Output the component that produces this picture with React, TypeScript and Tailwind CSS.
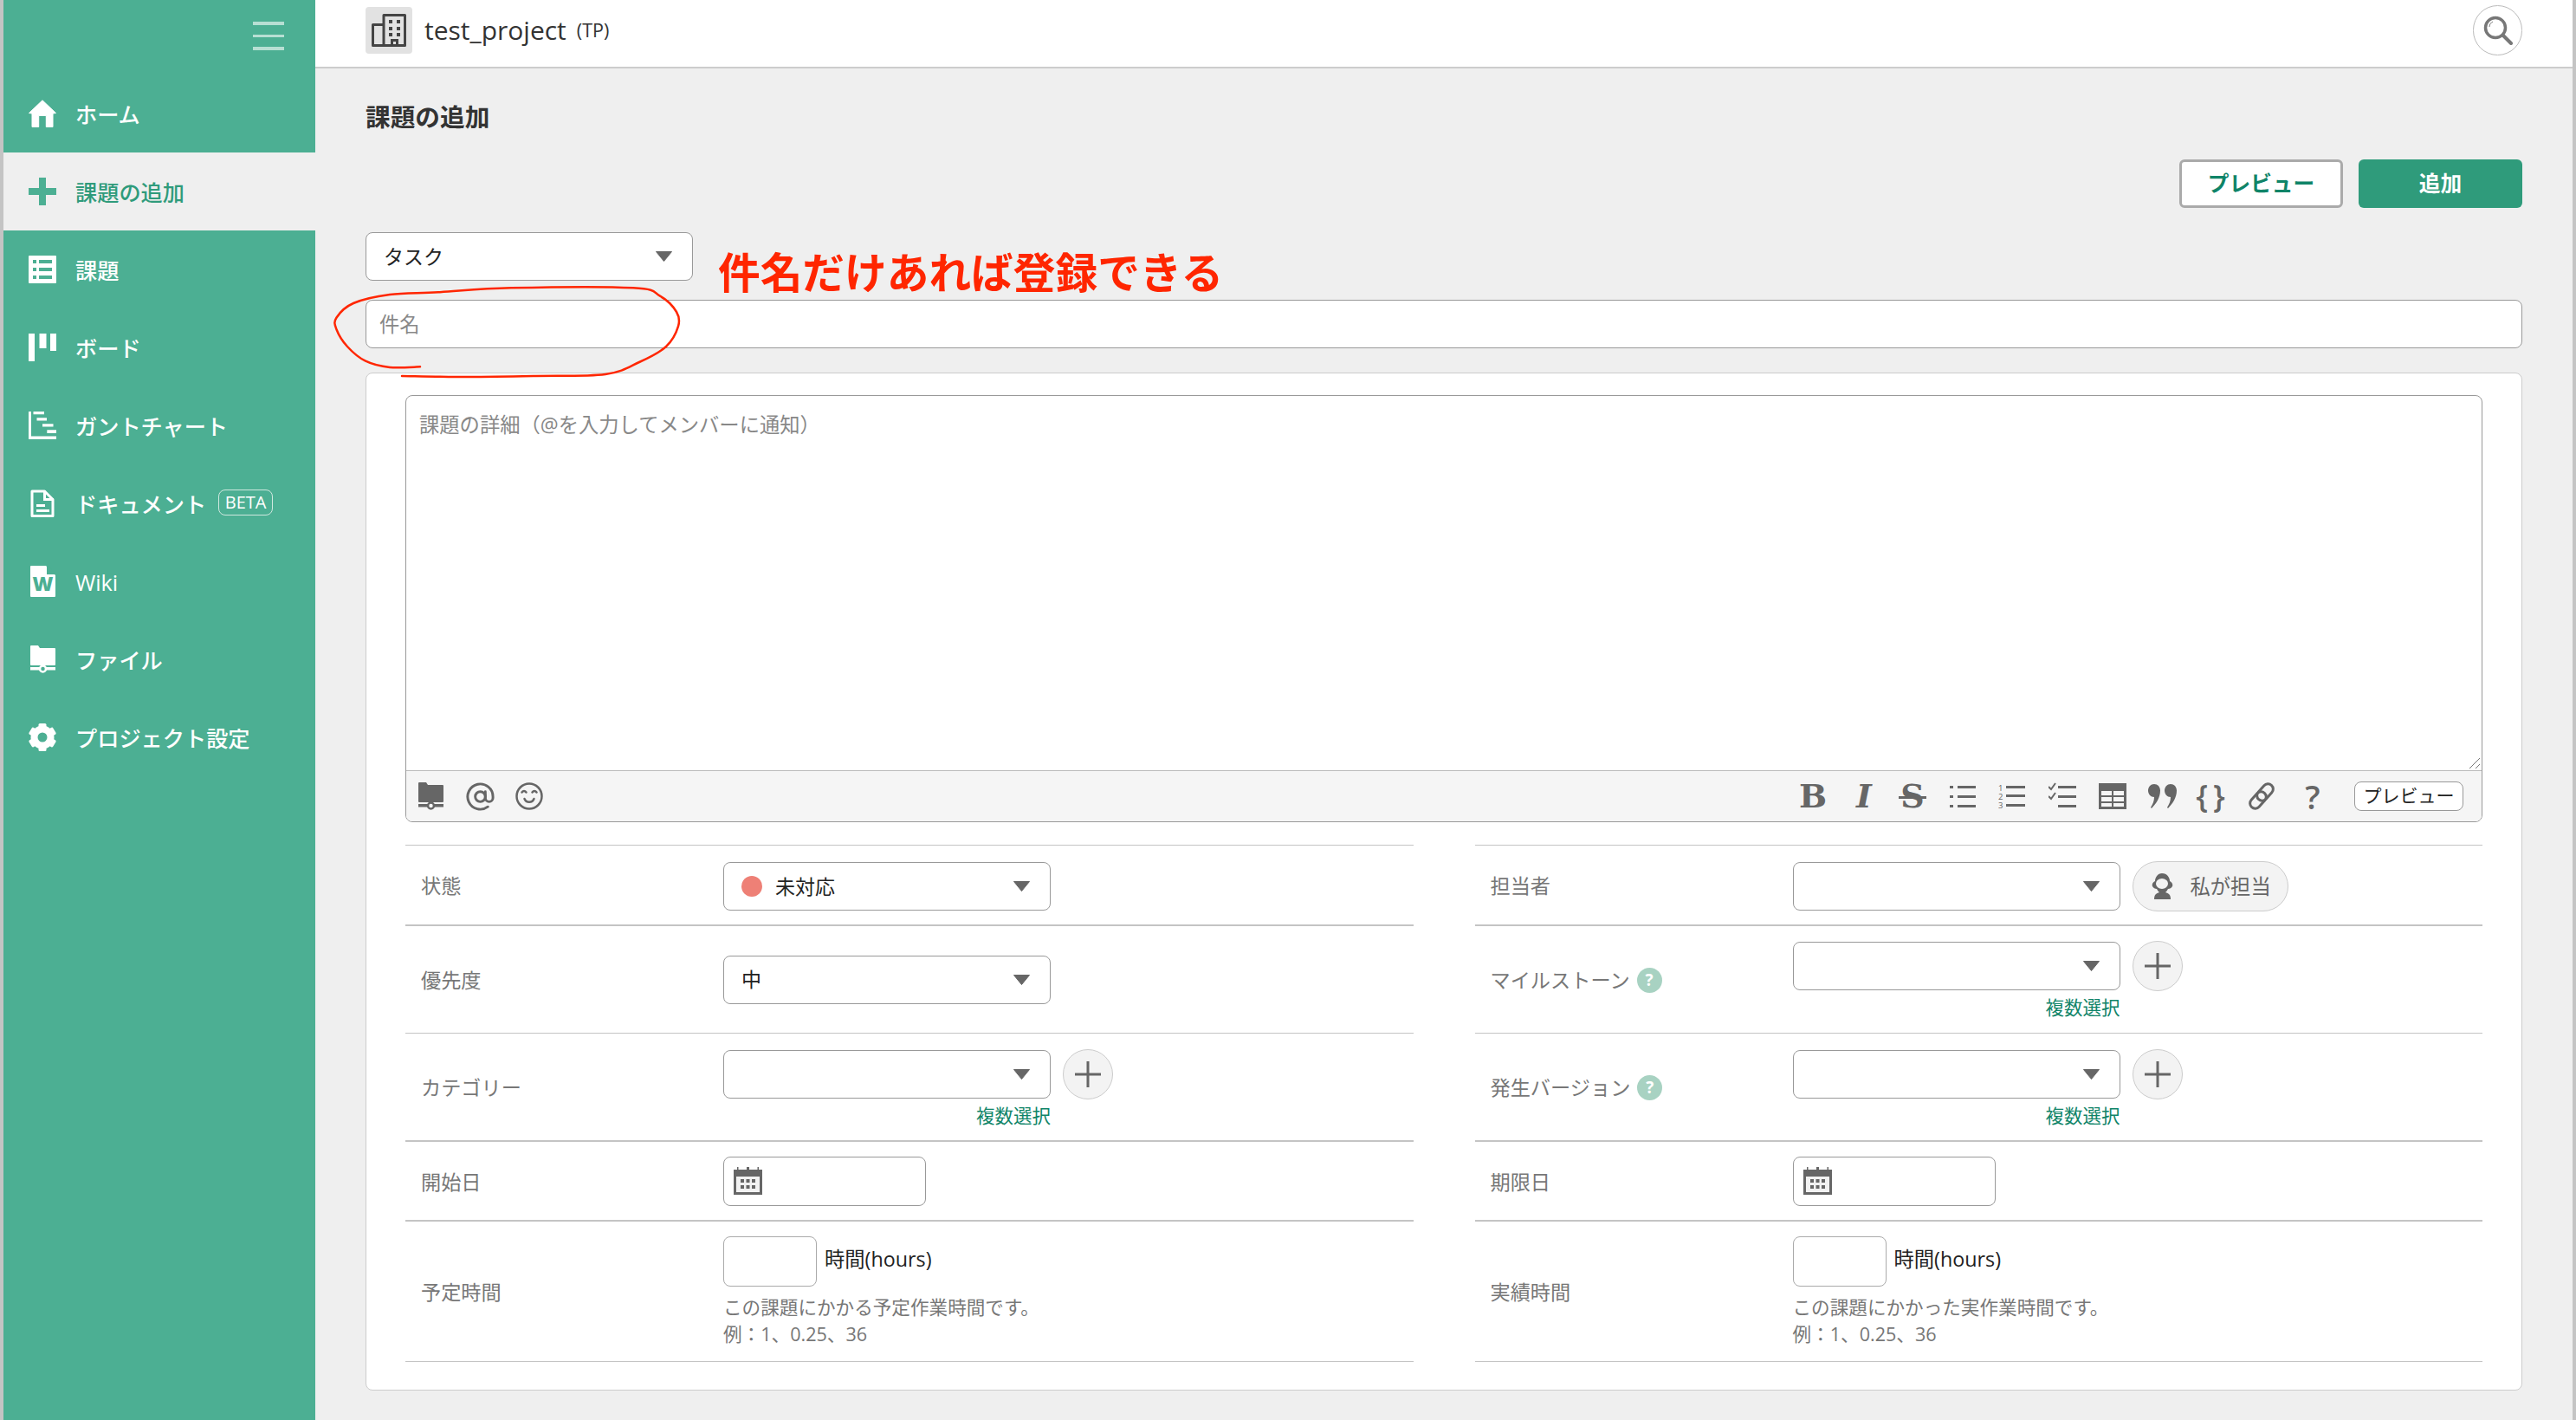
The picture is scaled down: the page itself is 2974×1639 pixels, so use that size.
import React from "react";
import { AtSign } from "lucide-react";

const W = "#4caf93";

function Svg({ w = 32, h = 32, children, className = "" }: { w?: number; h?: number; children: React.ReactNode; className?: string }) {
  return (
    <svg width={w} height={h} viewBox={`0 0 ${w} ${h}`} className={`shrink-0 ${className}`}>
      {children}
    </svg>
  );
}

const HomeI = ({ c = "#fff" }: { c?: string }) => (
  <Svg>
    <path fill={c} stroke={c} strokeWidth="1" strokeLinejoin="round" d="M16 .8 31.5 15.5 28 16V31.5H20.3V18.5H11.7V31.5H4V16L.5 15.5Z" />
  </Svg>
);
const PlusI = ({ c = "#fff" }: { c?: string }) => (
  <Svg>
    <path fill={c} d="M12 0h8v12h12v8H20v12h-8V20H0v-8h12z" />
  </Svg>
);
const ListI = ({ c = "#fff" }: { c?: string }) => (
  <Svg>
    <rect width="32" height="32" rx="1" fill={c} />
    <path fill={W} d="M5 5h4v4H5zM12 5h15v4H12zM5 14h4v4H5zM12 14h15v4H12zM5 23h4v4H5zM12 23h15v4H12z" />
  </Svg>
);
const BoardI = ({ c = "#fff" }: { c?: string }) => (
  <Svg>
    <path fill={c} d="M0 0h7v32H0zM12.500 0h8v17h-8zM25 0h7v20h-7z" />
  </Svg>
);
const GanttI = ({ c = "#fff" }: { c?: string }) => (
  <Svg>
    <path fill={c} d="M0 0h3v28.500h29V32H0zM5.500 0H18v3.300H5.500zM9.500 7.300H21v3.300H9.500zM16 14.300h12.500v3.300H16zM21.300 21.300H32V25H21.300z" />
  </Svg>
);
const DocI = ({ c = "#fff" }: { c?: string }) => (
  <Svg w={28}>
    <path fill="none" stroke={c} strokeWidth="3" strokeLinejoin="round" d="M2 2h14.500l9.500 9.500V30.500H2z" />
    <path fill={c} d="M15 1h3v9h9v3H15zM7 17h10v3H7zM7 23h15v3H7z" />
  </Svg>
);
const WikiI = () => (
  <Svg w={29} h={36}>
    <path fill="#fff" d="M1 0h17l11 11v24a1 1 0 0 1-1 1H1a1 1 0 0 1-1-1V1a1 1 0 0 1 1-1z" />
    <path fill={W} d="M19 0h1.200L29 9V10H19z" />
    <text x="14.500" y="29" textAnchor="middle" fontSize="23" fontWeight="800" fontFamily="Open Sans" fill={W}>W</text>
  </Svg>
);
const FolderI = ({ c = "#fff", bg = W }: { c?: string; bg?: string }) => (
  <Svg w={29}>
    <path fill={c} d="M0 1a1 1 0 0 1 1-1h8l2 3h17a1 1 0 0 1 1 1v18a1 1 0 0 1-1 1H1a1 1 0 0 1-1-1z" />
    <rect x="0" y="25" width="29" height="3.500" fill={c} />
    <rect x="13" y="21" width="3" height="4" fill={c} />
    <circle cx="14.500" cy="27" r="3.500" fill={bg} stroke={c} strokeWidth="2.500" />
  </Svg>
);
const GearI = ({ c = "#fff" }: { c?: string }) => (
  <Svg>
    <circle cx="16" cy="16" r="9.500" fill="none" stroke={c} strokeWidth="8" />
    {[0, 60, 120, 180, 240, 300].map((a) => (
      <rect key={a} x="11.500" y="0" width="9" height="7" rx="1.500" fill={c} transform={`rotate(${a} 16 16)`} />
    ))}
  </Svg>
);

function NavItem({ icon, label, active, beta }: { icon: React.ReactNode; label: string; active?: boolean; beta?: boolean }) {
  return (
    <div className={`flex h-[90px] items-center pl-[29px] text-[25.200px] font-medium ${active ? "bg-[#efefef] text-[#2f9b7b]" : "text-white"}`}>
      <div className="flex w-[32px] justify-center">{icon}</div>
      <span className="ml-[22px] pt-[4px] leading-none">{label}</span>
      {beta && (
        <span className="ml-[14px] -mt-[2px] flex h-[30px] w-[63px] items-center justify-center rounded-[8px] border border-[#cfe8df] text-[20px] font-normal leading-none">BETA</span>
      )}
    </div>
  );
}

function Caret() {
  return (
    <svg width="21" height="12" viewBox="0 0 21 12" className="absolute right-[22px] top-1/2 -mt-[6px]">
      <path d="M1.500 .5h18L10.500 11.500z" fill="#666" stroke="#666" strokeLinejoin="round" />
    </svg>
  );
}

function Select({ children, className = "" }: { children?: React.ReactNode; className?: string }) {
  return (
    <div className={`relative flex h-[56px] w-[378px] shrink-0 items-center rounded-[8px] border border-[#999] bg-white pl-[20px] text-[23px] text-[#222] ${className}`}>
      <div className="flex items-center">{children}</div>
      <Caret />
    </div>
  );
}

function AddBtn() {
  return (
    <div className="flex h-[58px] w-[58px] shrink-0 items-center justify-center rounded-full border border-[#ccc] bg-[#f3f3f3]">
      <svg width="30" height="30" viewBox="0 0 30 30">
        <path d="M13.500 0h3v13.500H30v3H16.500V30h-3V16.500H0v-3h13.500z" fill="#666" />
      </svg>
    </div>
  );
}

function SelectAdd() {
  return (
    <div className="self-start">
      <div className="flex items-center gap-[14px]">
        <Select />
        <AddBtn />
      </div>
      <div className="mt-[6px] w-[378px] text-right text-[21.500px] leading-[26px] text-[#0f8468]">複数選択</div>
    </div>
  );
}

function Help() {
  return (
    <span className="ml-[8px] inline-flex h-[29px] w-[29px] items-center justify-center rounded-full bg-[#a8d2c2] text-[19px] font-bold leading-none text-white">?</span>
  );
}

function Row({ label, help, h, thick, children }: { label: string; help?: boolean; h: string; thick?: boolean; children: React.ReactNode }) {
  return (
    <div className={`flex ${h} items-center ${thick ? "border-b-2" : "border-b"} border-[#c4c4c4]`}>
      <div className="flex w-[367px] shrink-0 items-center pl-[18px] pt-[2px] text-[23.200px] text-[#777]">
        {label}
        {help && <Help />}
      </div>
      {children}
    </div>
  );
}

function Calendar() {
  return (
    <svg width="33" height="32" viewBox="0 0 33 32" className="ml-[11px]">
      <path fill="#666" d="M0 3h4V0h1.500v3H15V0h3v3h9.500V0H29v3h4v29H0z" />
      <rect x="3" y="11" width="27" height="18" fill="#f2f2f2" />
      {[8, 14.5, 21].map((x) => [14, 21].map((y) => <rect key={`${x}-${y}`} x={x} y={y} width="4" height="4" fill="#666" />))}
    </svg>
  );
}

function DateInput() {
  return (
    <div className="flex h-[57px] w-[234px] items-center rounded-[8px] border border-[#999] bg-white">
      <Calendar />
    </div>
  );
}

function Hours({ text }: { text: string }) {
  return (
    <div className="self-start pt-[17px]">
      <div className="flex items-center">
        <div className="h-[58px] w-[108px] rounded-[8px] border border-[#aaa] bg-white" />
        <span className="ml-[9px] -mt-[5px] text-[23.300px] text-[#222]">時間(hours)</span>
      </div>
      <div className="mt-[8px] text-[21.600px] leading-[31px] text-[#777]">
        <div>{text}</div>
        <div>例：1、0.25、36</div>
      </div>
    </div>
  );
}

function ToolIcon({ children, w, className = "" }: { children: React.ReactNode; w: string; className?: string }) {
  return <div className={`relative flex ${w} shrink-0 items-center justify-center text-[#666] ${className}`}>{children}</div>;
}

function ListSvg() {
  return (
    <svg width="30" height="30" viewBox="0 0 30 30">
      <path fill="#666" d="M0 3h4v3H0zM9 3h21v3H9zM0 14h4v3H0zM9 14h21v3H9zM0 25h4v3H0zM9 25h21v3H9z" />
    </svg>
  );
}
function OlSvg() {
  return (
    <svg width="32" height="34" viewBox="0 0 32 34">
      <text x="0" y="11" fontSize="9.500" fontFamily="Open Sans" fill="#666">1</text>
      <text x="0" y="21" fontSize="9.500" fontFamily="Open Sans" fill="#666">2</text>
      <text x="0" y="31" fontSize="9.500" fontFamily="Open Sans" fill="#666">3</text>
      <path fill="#666" d="M9 5h22v3H9zM9 15h22v3H9zM9 26h22v3H9z" />
    </svg>
  );
}
function CheckSvg() {
  return (
    <svg width="32" height="32" viewBox="0 0 32 32">
      <path fill="none" stroke="#666" strokeWidth="2" d="M0 5l3 3 5-7M0 16l3 3 5-7" />
      <path fill="#666" d="M11 4h21v3H11zM11 15h21v3H11zM11 26h21v3H11z" />
    </svg>
  );
}
function TableSvg() {
  return (
    <svg width="32" height="30" viewBox="0 0 32 30">
      <rect width="32" height="30" fill="#666" />
      <path fill="#f5f5f5" d="M3 9h12v5H3zM17 9h12v5H17zM3 16h12v5H3zM17 16h12v5H17zM3 23h12v4H3zM17 23h12v4H17z" />
    </svg>
  );
}
function QuoteSvg() {
  return (
    <svg width="33" height="28" viewBox="0 0 33 28">
      <path fill="#666" d="M7 0c4 0 7 3 7 7.500 0 8-4.500 15-10 20.500l-1-1c2.500-4 4-7.500 4-12C3 15 0 11.500 0 7.500S3 0 7 0zM26 0c4 0 7 3 7 7.500 0 8-4.500 15-10 20.500l-1-1c2.500-4 4-7.500 4-12-4 0-7-3.500-7-7.500S22 0 26 0z" />
    </svg>
  );
}
function LinkSvg() {
  return (
    <svg width="32" height="32" viewBox="0 0 32 32" fill="none" stroke="#666" strokeWidth="3">
      <g transform="rotate(-48 16 16)">
        <rect x="-1" y="10" width="22" height="12" rx="6" />
        <rect x="11" y="10" width="22" height="12" rx="6" />
      </g>
    </svg>
  );
}
function Smile() {
  return (
    <svg width="32" height="32" viewBox="0 0 32 32" fill="none" stroke="#666" strokeWidth="2.500">
      <circle cx="16" cy="16" r="14.500" />
      <path d="M7.500 11.500c1.500-2 3.500-2 5 0M19.500 11.500c1.500-2 3.500-2 5 0M10.500 19c2 5 9 5 11 0" strokeLinecap="round" />
    </svg>
  );
}

function Editor() {
  return (
    <div className="flex h-[493px] flex-col overflow-hidden rounded-[8px] border border-[#999] bg-white">
      <div className="relative flex-1 pl-[15px] pt-[16px] text-[23.300px] leading-[34px] text-[#888]">
        課題の詳細（@を入力してメンバーに通知）
        <svg width="14" height="14" viewBox="0 0 14 14" className="absolute bottom-[1px] right-[1px]">
          <path d="M1 13 13 1M8 13l5-5" stroke="#777" strokeWidth="1" />
        </svg>
      </div>
      <div className="flex h-[59px] items-center border-t border-[#bbb] bg-[#f5f5f5] pl-[14px] pr-[21px]">
        <FolderI c="#666" bg="#f5f5f5" />
        <AtSign size={35} strokeWidth={2} className="ml-[25px] text-[#666]" />
        <div className="ml-[23px]"><Smile /></div>
        <div className="flex-1" />
        <ToolIcon w="w-[28px]" className="font-['DejaVu_Serif',serif] text-[38px] font-bold leading-none">B</ToolIcon>
        <ToolIcon w="w-[20px]" className="ml-[35px] font-['DejaVu_Serif',serif] text-[38px] font-bold italic leading-none">I</ToolIcon>
        <ToolIcon w="w-[32px]" className="ml-[30px] font-['DejaVu_Serif',serif] text-[38px] font-bold leading-none">
          S
          <span className="absolute left-0 right-0 top-1/2 h-[3px] bg-[#666]" />
        </ToolIcon>
        <ToolIcon w="w-[30px]" className="ml-[27px]"><ListSvg /></ToolIcon>
        <ToolIcon w="w-[32px]" className="ml-[26px]"><OlSvg /></ToolIcon>
        <ToolIcon w="w-[32px]" className="ml-[26px]"><CheckSvg /></ToolIcon>
        <ToolIcon w="w-[32px]" className="ml-[26px]"><TableSvg /></ToolIcon>
        <ToolIcon w="w-[33px]" className="ml-[25px]"><QuoteSvg /></ToolIcon>
        <ToolIcon w="w-[30px]" className="ml-[27px] whitespace-nowrap text-[36px] font-semibold leading-none tracking-[6px]">{"{}"}</ToolIcon>
        <ToolIcon w="w-[32px]" className="ml-[25px]"><LinkSvg /></ToolIcon>
        <ToolIcon w="w-[20px]" className="ml-[33px] text-[38px] font-semibold leading-none">?</ToolIcon>
        <div className="ml-[38px] flex h-[34px] w-[126px] items-center justify-center rounded-[8px] border border-[#999] bg-white text-[21px] text-[#222]">プレビュー</div>
      </div>
    </div>
  );
}

const LOOP: [number, number][] = [
  [105, 98.3], [70, 99], [42, 91.7], [21, 75], [8.4, 55], [8.4, 41.7], [28, 25], [70, 15], [126, 12.3], [210, 7.3],
  [351, 7.3], [382, 16.7], [401, 35], [403, 51.7], [389, 75], [358, 93], [319, 107], [238.5, 109], [161, 110], [84, 109],
];

function smooth(p: [number, number][]) {
  let d = `M${p[0][0]} ${p[0][1]}`;
  for (let i = 0; i < p.length - 1; i++) {
    const a = p[Math.max(i - 1, 0)];
    const b = p[i];
    const c = p[i + 1];
    const e = p[Math.min(i + 2, p.length - 1)];
    d += `C${b[0] + (c[0] - a[0]) / 6} ${b[1] + (c[1] - a[1]) / 6} ${c[0] - (e[0] - b[0]) / 6} ${c[1] - (e[1] - b[1]) / 6} ${c[0]} ${c[1]}`;
  }
  return d;
}

export default function App() {
  return (
    <div className="relative flex h-[1639px] w-full overflow-hidden bg-[#efefef] font-['Open_Sans','Noto_Sans_CJK_JP',sans-serif]">
      <div className="w-[4px] shrink-0 bg-[#c4c4c4]" />
      <aside className="w-[360px] shrink-0 bg-[#4caf93]">
        <div className="flex h-[86px] justify-end pr-[36px] pt-[25px]">
          <div className="flex h-[33px] w-[36px] flex-col justify-between">
            <div className="h-[4px] bg-[#b7dfd3]" />
            <div className="h-[3px] bg-[#b7dfd3]" />
            <div className="h-[4px] bg-[#b7dfd3]" />
          </div>
        </div>
        <NavItem icon={<HomeI />} label="ホーム" />
        <NavItem icon={<PlusI c="#4caf93" />} label="課題の追加" active />
        <NavItem icon={<ListI />} label="課題" />
        <NavItem icon={<BoardI />} label="ボード" />
        <NavItem icon={<GanttI />} label="ガントチャート" />
        <NavItem icon={<DocI />} label="ドキュメント" beta />
        <NavItem icon={<WikiI />} label="Wiki" />
        <NavItem icon={<FolderI />} label="ファイル" />
        <NavItem icon={<GearI />} label="プロジェクト設定" />
      </aside>
      <main className="flex min-w-0 flex-1 flex-col">
        <header className="flex h-[79px] shrink-0 items-center border-b-2 border-[#ccc] bg-white px-[58px]">
          <div className="-mt-[7px] flex h-[54px] w-[54px] items-center justify-center rounded-[4px] bg-[#e2e2e2]">
            <svg width="40" height="38" viewBox="0 0 40 38" fill="none" stroke="#444" strokeWidth="3">
              <path d="M14 36.500V1.500h24.500v35zM14 12.500H1.500v24H14" strokeLinejoin="round" />
              <path fill="#444" stroke="none" d="M20 7h4v4h-4zM29 7h4v4h-4zM20 15h4v4h-4zM29 15h4v4h-4zM20 22h4v4h-4zM29 22h4v4h-4zM22 29h9v8h-3v-5h-3v5h-3z" />
            </svg>
          </div>
          <span className="-mt-[8px] ml-[14px] text-[30px] leading-none text-[#333]">test_project</span>
          <span className="-mt-[8px] ml-[12px] text-[21.500px] leading-none text-[#333]">(TP)</span>
          <div className="flex-1" />
          <div className="-mt-[8px] flex h-[58px] w-[57px] items-center justify-center rounded-full border border-[#bbb] bg-white">
            <svg width="34" height="34" viewBox="0 0 34 34" fill="none" stroke="#777" strokeWidth="3.500">
              <circle cx="14" cy="14" r="11.500" />
              <path d="m23 23 9 9" strokeLinecap="round" strokeWidth="4" />
              <path d="M7 13c0-3 2-5 4-6" strokeWidth="1" />
            </svg>
          </div>
        </header>
        <div className="px-[58px]">
          <h1 className="mt-[36px] flex h-[40px] items-center text-[28.700px] font-bold leading-none text-[#333]">課題の追加</h1>
          <div className="mt-[29px] flex justify-end gap-[18px]">
            <div className="flex h-[56px] w-[189px] items-center justify-center rounded-[6px] border-[3px] border-[#aaa] bg-white text-[24.700px] font-bold text-[#0f8468]">プレビュー</div>
            <div className="flex h-[56px] w-[189px] items-center justify-center rounded-[6px] bg-[#2f9b7b] text-[24.700px] font-bold text-white">追加</div>
          </div>
          <div className="mt-[28px] flex h-[55px]">
            <Select>タスク</Select>
          </div>
          <div className="mt-[23px] flex h-[56px] items-center rounded-[8px] border border-[#999] bg-white pl-[15px] text-[23.300px] text-[#888]">件名</div>
          <section className="mt-[28px] rounded-[8px] border border-[#ccc] bg-white px-[45px] pb-[32px] pt-[25px]">
            <Editor />
            <div className="mt-[26px] grid grid-cols-2 gap-x-[71px]">
              <div className="border-t border-[#c4c4c4]">
                <Row label="状態" h="h-[93px]" thick>
                  <Select className="mt-[3px]">
                    <span className="mr-[15px] h-[24px] w-[24px] rounded-full bg-[#ee8076]" />
                    未対応
                  </Select>
                </Row>
                <Row label="優先度" h="h-[124px]">
                  <Select>中</Select>
                </Row>
                <Row label="カテゴリー" h="h-[125px]" thick>
                  <div className="self-start pt-[18px]"><SelectAdd /></div>
                </Row>
                <Row label="開始日" h="h-[92px]" thick>
                  <DateInput />
                </Row>
                <Row label="予定時間" h="h-[162px]">
                  <Hours text="この課題にかかる予定作業時間です。" />
                </Row>
              </div>
              <div className="border-t border-[#c4c4c4]">
                <Row label="担当者" h="h-[93px]" thick>
                  <Select className="mt-[3px]" />
                  <div className="ml-[14px] mt-[3px] flex h-[58px] w-[180px] items-center rounded-full border border-[#ccc] bg-[#f3f3f3] pl-[20px] text-[23.300px] text-[#666]">
                    <svg width="26" height="30" viewBox="0 0 26 30" className="mr-[20px]">
                      <path fill="#666" d="M13 0c6 0 9 5 9 9 2 1 4 3 3 6-1 2-3 3-5 3-1 2-2 3-3 4 4 1 6 3 6 8H4c0-5 2-7 6-8-1-1-2-2-3-4-2 0-4-1-5-3-1-3 1-5 3-6 0-4 3-9 8-9z" />
                      <ellipse cx="13" cy="12" rx="7" ry="6" fill="#f3f3f3" />
                    </svg>
                    私が担当
                  </div>
                </Row>
                <Row label="マイルストーン" help h="h-[124px]">
                  <div className="self-start pt-[17px]"><SelectAdd /></div>
                </Row>
                <Row label="発生バージョン" help h="h-[125px]" thick>
                  <div className="self-start pt-[18px]"><SelectAdd /></div>
                </Row>
                <Row label="期限日" h="h-[92px]" thick>
                  <DateInput />
                </Row>
                <Row label="実績時間" h="h-[162px]">
                  <Hours text="この課題にかかった実作業時間です。" />
                </Row>
              </div>
            </div>
          </section>
        </div>
      </main>
      <div className="w-[4px] shrink-0 bg-[#c4c4c4]" />

      <div className="absolute left-[829px] top-[284px] text-[48.700px] font-bold leading-[60px] text-[#ff2600]">件名だけあれば登録できる</div>
      <svg width="460" height="130" viewBox="0 0 460 130" className="absolute left-[380px] top-[325px]" fill="none" stroke="#ff2600" strokeWidth="2.500" strokeLinecap="round" strokeLinejoin="round">
        <path d={smooth(LOOP)} />
      </svg>
    </div>
  );
}
